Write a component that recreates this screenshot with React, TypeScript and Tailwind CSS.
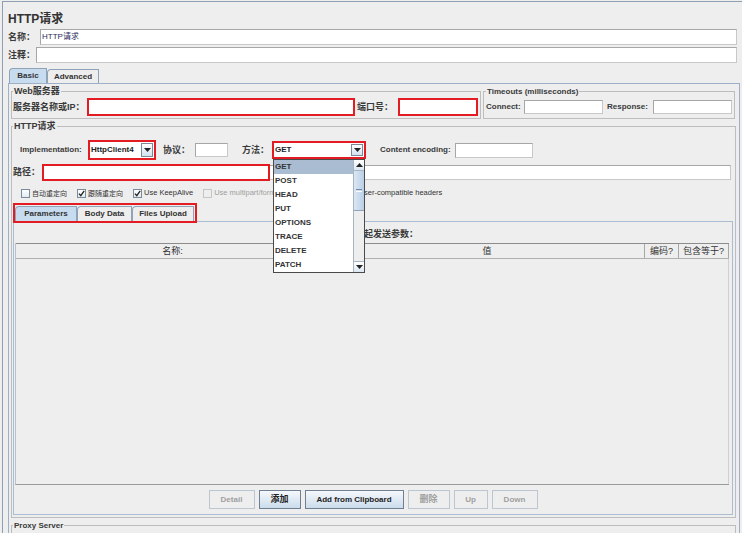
import type { ReactNode } from "react";

const methods = ["GET", "POST", "HEAD", "PUT", "OPTIONS", "TRACE", "DELETE", "PATCH"];

function Lbl({ children, className = "" }: { children: ReactNode; className?: string }) {
  return <span className={`shrink-0 whitespace-nowrap text-[8px] font-bold leading-none text-[#3a3a3a] ${className}`}>{children}</span>;
}

function Input({ className = "", children }: { className?: string; children?: ReactNode }) {
  return (
    <div className={`flex items-center border border-[#a6a6a6] border-b-[#c8c8c8] border-r-[#c8c8c8] bg-white ${className}`}>
      {children}
    </div>
  );
}

function Arrow({ up = false }: { up?: boolean }) {
  return (
    <svg width="7" height="4" viewBox="0 0 7 4">
      <path d={up ? "M0 4h7L3.5 0z" : "M0 0h7L3.5 4z"} fill="#222" />
    </svg>
  );
}

function Combo({ value, className = "" }: { value: string; className?: string }) {
  return (
    <div className={`flex shrink-0 border-2 border-[#e31b23] bg-white ${className}`}>
      <span className="flex flex-1 items-center pl-[1px] text-[8px] font-bold leading-none text-[#222]">{value}</span>
      <span className="my-[1px] mr-[1px] flex w-[12px] items-center justify-center border border-[#7a8a99] bg-gradient-to-b from-white to-[#d3e1ef]">
        <Arrow />
      </span>
    </div>
  );
}

function Check({ label, checked = false, disabled = false, cjk = false }: { label: string; checked?: boolean; disabled?: boolean; cjk?: boolean }) {
  return (
    <span className="flex items-center gap-[2px]">
      <span
        className={`flex h-[9px] w-[9px] items-center justify-center border ${
          disabled ? "border-[#c4c4c4] bg-[#eeeeee]" : "border-[#7a8a99] bg-gradient-to-b from-white to-[#e2eaf2]"
        }`}
      >
        {checked && (
          <svg width="7" height="7" viewBox="0 0 7 7">
            <path d="M1 3.6l1.8 2.1L6.2 0.8" stroke="#222" strokeWidth="1.3" fill="none" />
          </svg>
        )}
      </span>
      <span className={`whitespace-nowrap leading-none ${cjk ? "text-[7px]" : "text-[7.5px]"} ${disabled ? "text-[#a0a0a0]" : "text-[#333]"}`}>
        {label}
      </span>
    </span>
  );
}

function Tab({ children, selected = false, className = "" }: { children: ReactNode; selected?: boolean; className?: string }) {
  return (
    <div
      className={`flex items-center justify-center rounded-tl-[4px] border border-b-0 border-[#8ea2b8] text-[8px] font-bold leading-none text-[#333] ${
        selected ? "bg-[#c8dcf0]" : "bg-[#eeeeee]"
      } ${className}`}
    >
      {children}
    </div>
  );
}

function Btn({ children, enabled = false, className = "" }: { children: ReactNode; enabled?: boolean; className?: string }) {
  return (
    <div
      className={`flex h-[19px] items-center justify-center border text-[8px] font-bold leading-none ${
        enabled
          ? "border-[#6f8094] bg-gradient-to-b from-[#f5f8fc] to-[#cbdcec] text-[#222]"
          : "border-[#bcc6d1] bg-[#eeeeee] text-[#a0a0a0]"
      } ${className}`}
    >
      {children}
    </div>
  );
}

export default function App() {
  return (
    <div className="relative h-[533px] w-[742px] overflow-hidden bg-[#eeeeee] font-['Liberation_Sans','Noto_Sans_CJK_SC',sans-serif] text-[#333]">
      <div className="ml-[2px] mt-[1px] h-[532px] border-l border-t border-[#8e9fb3] pl-[5px] pr-[2px]">
        <div className="flex h-[27px] items-center pt-[6px] text-[12px] font-bold text-[#333]">HTTP请求</div>

        <div className="mr-[3px] flex h-[16px] items-center">
          <Lbl className="w-[32px] text-[9px]">名称：</Lbl>
          <Input className="h-full flex-1">
            <span className="pl-[1px] text-[8px] leading-none text-[#2b2b5e]">HTTP请求</span>
          </Input>
        </div>
        <div className="mr-[3px] mt-[2px] flex h-[16px] items-center">
          <Lbl className="w-[28px] text-[9px]">注释：</Lbl>
          <Input className="h-full flex-1" />
        </div>

        <div className="ml-[1px] mt-[5px] flex h-[15px] items-end">
          <Tab selected className="h-[15px] w-[38px]">Basic</Tab>
          <Tab className="h-[14px] w-[52px]">Advanced</Tab>
        </div>

        <div className="h-[500px] border border-b-0 border-[#9db0c6] px-[2px] pt-[3px]">
          {/* server + timeouts */}
          <div className="mr-[2px] flex gap-[2px]">
            <fieldset className="w-[470px] border border-[#bdbdbd] pb-[1px] pl-[1px]">
              <legend className="px-[1px] text-[9px] font-bold leading-[9px] text-[#3a3a3a]">Web服务器</legend>
              <div className="mt-[1px] flex h-[20px] items-center">
                <Lbl className="w-[74px] text-[9px]">服务器名称或IP：</Lbl>
                <Input className="h-[18px] w-[268px] border-2 !border-[#e31b23]" />
                <Lbl className="ml-[2px] w-[41px] text-[9px]">端口号：</Lbl>
                <Input className="h-[18px] w-[80px] border-2 !border-[#e31b23]" />
              </div>
            </fieldset>
            <fieldset className="flex-1 border border-[#bdbdbd] pb-[1px] pl-[2px]">
              <legend className="px-[1px] text-[8px] font-bold leading-[9px] text-[#3a3a3a]">Timeouts (milliseconds)</legend>
              <div className="mt-[1px] flex h-[20px] items-center">
                <Lbl className="w-[38px]">Connect:</Lbl>
                <Input className="h-[14px] w-[79px]" />
                <Lbl className="ml-[4px] w-[46px]">Response:</Lbl>
                <Input className="h-[14px] w-[79px]" />
              </div>
            </fieldset>
          </div>

          {/* HTTP request */}
          <fieldset className="mr-[1px] mt-[3px] border border-[#bdbdbd] pb-[2px]">
            <legend className="ml-[1px] px-[1px] text-[9px] font-bold leading-[9px] text-[#3a3a3a]">HTTP请求</legend>

            <div className="mt-[9px] flex h-[20px] items-center pl-[8px]">
              <Lbl className="w-[68px]">Implementation:</Lbl>
              <Combo value="HttpClient4" className="h-[20px] w-[68px]" />
              <Lbl className="ml-[7px] w-[32px] text-[9px]">协议：</Lbl>
              <Input className="h-[14px] w-[33px]" />
              <Lbl className="ml-[14px] w-[30px] text-[9px]">方法：</Lbl>
              <Combo value="GET" className="h-[18px] w-[94px]" />
              <Lbl className="ml-[14px] w-[75px]">Content encoding:</Lbl>
              <Input className="h-[15px] w-[78px]" />
            </div>

            <div className="mr-[4px] mt-[4px] flex h-[17px] items-center pl-[1px]">
              <Lbl className="w-[29px] text-[9px]">路径：</Lbl>
              <div className="relative h-full flex-1">
                <Input className="mt-[1px] h-[15px] w-full" />
                <div className="absolute left-0 top-0 h-[17px] w-[228px] border-2 border-[#e31b23]" />
              </div>
            </div>

            <div className="mt-[6px] flex h-[12px] items-center gap-[10px] pl-[9px]">
              <Check label="自动重定向" cjk />
              <Check label="跟随重定向" checked cjk />
              <Check label="Use KeepAlive" checked />
              <Check label="Use multipart/form-data for POST" disabled />
              <Check label="Browser-compatible headers" />
            </div>

            <div className="relative ml-[3px] mt-[7px] flex h-[15px]">
              <Tab selected className="h-[15px] w-[62px]">Parameters</Tab>
              <Tab className="h-[15px] w-[55px]">Body Data</Tab>
              <Tab className="h-[15px] w-[62px]">Files Upload</Tab>
              <div className="absolute left-[-2px] top-[-3px] h-[20px] w-[184px] border-2 border-[#e31b23]" />
            </div>

            <div className="ml-[1px] mr-[2px] border border-[#a9bdd3] pb-[5px]">
              <div className="mt-[3px] flex h-[18px] items-center justify-center text-[9px] font-bold leading-none text-[#3a3a3a]">
                同请求一起发送参数：
              </div>
              <div className="ml-[1px] mr-[3px] flex h-[242px] flex-col border-b border-l border-b-[#9a9a9a] border-l-[#b3c4d6]">
                <div className="flex h-[16px] border-b border-t border-b-[#b0b0b0] border-t-[#8c8c8c] text-[9px] leading-none text-[#333]">
                  <div className="flex w-[314px] items-center justify-center border-r border-[#a8a8a8]">名称:</div>
                  <div className="flex w-[315px] items-center justify-center border-r border-[#a8a8a8]">值</div>
                  <div className="flex w-[34px] items-center justify-center border-r border-[#a8a8a8]">编码?</div>
                  <div className="flex flex-1 items-center justify-center border-r border-[#a8a8a8]">包含等于?</div>
                </div>
                <div className="flex-1 border-r border-[#d0d0d0]" />
              </div>
              <div className="mt-[5px] flex justify-center gap-[4px]">
                <Btn className="w-[46px]">Detail</Btn>
                <Btn enabled className="w-[42px] text-[9px]">添加</Btn>
                <Btn enabled className="w-[99px]">Add from Clipboard</Btn>
                <Btn className="w-[42px] text-[9px]">删除</Btn>
                <Btn className="w-[34px]">Up</Btn>
                <Btn className="w-[46px]">Down</Btn>
              </div>
            </div>
          </fieldset>

          <fieldset className="mr-[1px] mt-[3px] h-[30px] border border-[#bdbdbd]">
            <legend className="ml-[1px] px-[1px] text-[8px] font-bold leading-[9px] text-[#3a3a3a]">Proxy Server</legend>
          </fieldset>
        </div>
      </div>

      {/* open method dropdown */}
      <div className="absolute left-[273px] top-[159px] flex h-[114px] w-[92px] border border-[#4a4a4a] bg-white">
        <div className="flex flex-1 flex-col">
          {methods.map((m, i) => (
            <div
              key={m}
              className={`flex h-[14px] items-center pl-[1px] text-[8px] font-bold leading-none text-[#333] ${i === 0 ? "bg-[#a9bcd1]" : ""}`}
            >
              {m}
            </div>
          ))}
        </div>
        <div className="flex w-[11px] flex-col border-l border-[#a7b4c2] bg-[#eeeeee]">
          <div className="flex h-[11px] items-center justify-center border-b border-[#a7b4c2] bg-gradient-to-b from-white to-[#dde7f1]">
            <Arrow up />
          </div>
          <div className="flex h-[40px] flex-col items-center justify-center gap-[1px] border-b border-[#8ea2b8] bg-gradient-to-r from-[#dbe7f3] to-[#b9cfe5]">
            <span className="h-[1px] w-[6px] bg-[#6f8aa8]" />
            <span className="h-[1px] w-[6px] bg-white" />
          </div>
          <div className="flex-1" />
          <div className="flex h-[11px] items-center justify-center border-t border-[#a7b4c2] bg-gradient-to-b from-white to-[#dde7f1]">
            <Arrow />
          </div>
        </div>
      </div>
    </div>
  );
}
